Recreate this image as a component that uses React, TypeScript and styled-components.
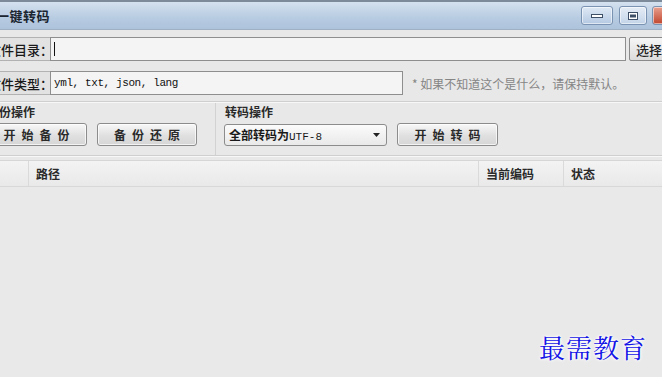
import React from "react";
import styled, { createGlobalStyle } from "styled-components";

const Global = createGlobalStyle`
  html, body { margin: 0; padding: 0; background: #e6e6e6; overflow: hidden; }
  body { font-family: "Noto Sans CJK SC", "Liberation Sans", sans-serif; }
  #root { width: 662px; height: 377px; overflow: hidden; }
`;

const Window = styled.div`
  margin-left: -14px;
  width: 712px;
  height: 377px;
  display: flex;
  flex-direction: column;
  background: #e8e8e8;
`;

const TitleBar = styled.div`
  height: 27px;
  border-top: 2px solid #7d8a99;
  background: linear-gradient(#d4e1ef, #b7cbe1 60%, #adc3dc);
  border-bottom: 1px solid #9fb0c4;
  display: flex;
  align-items: center;
  padding-left: 10px;
`;

const Title = styled.div`
  flex: 1;
  font-size: 13px;
  font-weight: 700;
  color: #1a2530;
  letter-spacing: 0.5px;
`;

const WinBtn = styled.div<{ $w: number; $bg: string; $mr: number }>`
  width: ${p => p.$w}px;
  height: 17px;
  margin-right: ${p => p.$mr}px;
  border: 1px solid #7b93b2;
  border-radius: 3px;
  background: ${p => p.$bg};
  display: flex;
  align-items: center;
  justify-content: center;
  box-shadow: inset 0 0 0 1px rgba(255,255,255,0.55);
`;

const Body = styled.div`
  display: flex;
  flex-direction: column;
  padding: 7px 0 0 0;
`;

const FieldRow = styled.div<{ $mb: number }>`
  display: flex;
  align-items: center;
  height: 24px;
  margin-bottom: ${p => p.$mb}px;
`;

const Label = styled.div`
  width: 64px;
  height: 24px;
  box-sizing: border-box;
  border: 1px solid #b2b2b2;
  border-right: none;
  background: #e2e2e2;
  display: flex;
  align-items: center;
  padding-left: 1px;
  font-size: 13px;
  font-weight: 500;
  color: #1a1a1a;
  white-space: nowrap;
`;

const Input = styled.div<{ $w: number }>`
  width: ${p => p.$w}px;
  height: 24px;
  box-sizing: border-box;
  border: 1px solid #8e8e8e;
  background: #f4f4f4;
  display: flex;
  align-items: center;
  padding-left: 3px;
  font-family: "Liberation Mono", "DejaVu Sans Mono", monospace;
  font-size: 11px;
  color: #111;
  letter-spacing: -0.4px;
`;

const Caret = styled.span`
  width: 1px;
  height: 14px;
  background: #111;
`;

const SideButton = styled.div`
  margin-left: 3px;
  height: 24px;
  width: 50px;
  box-sizing: border-box;
  border: 1px solid #8a8a8a;
  border-radius: 2px;
  background: linear-gradient(#f6f6f6, #dcdcdc);
  display: flex;
  align-items: center;
  padding-left: 6px;
  font-size: 13px;
  font-weight: 500;
  color: #222;
`;

const Hint = styled.div`
  margin-left: 9px;
  font-size: 12px;
  color: #858585;
  white-space: nowrap;
`;

const Separator = styled.div`
  height: 1px;
  background: #cfcfcf;
  border-bottom: 1px solid #f7f7f7;
`;

const Groups = styled.div`
  display: flex;
  height: 52px;
`;

const Group = styled.div<{ $w: number; $divider?: boolean }>`
  width: ${p => p.$w}px;
  box-sizing: border-box;
  padding: 1px 0 0 ${p => (p.$divider ? 8 : 0)}px;
  border-left: ${p => (p.$divider ? "1px solid #d2d2d2" : "none")};
  display: flex;
  flex-direction: column;
  gap: 3px;
`;

const GroupTitle = styled.div`
  font-size: 12px;
  font-weight: 700;
  color: #2a2a2a;
  height: 16px;
  line-height: 16px;
  padding-left: 1px;
`;

const ButtonRow = styled.div`
  display: flex;
  align-items: center;
  gap: 10px;
`;

const PushButton = styled.div<{ $w: number }>`
  width: ${p => p.$w}px;
  height: 23px;
  box-sizing: border-box;
  border: 1px solid #8c8c8c;
  border-radius: 3px;
  background: linear-gradient(#f8f8f8, #e0e0e0 55%, #d6d6d6);
  box-shadow: inset 0 0 0 1px rgba(255,255,255,0.7);
  display: flex;
  align-items: center;
  justify-content: center;
  font-size: 12px;
  font-weight: 700;
  color: #2a2a2a;
  letter-spacing: 6px;
  text-indent: 6px;
`;

const Select = styled.div`
  width: 163px;
  height: 22px;
  box-sizing: border-box;
  border: 1px solid #8c8c8c;
  border-radius: 3px;
  background: linear-gradient(#fbfbfb, #e9e9e9);
  display: flex;
  align-items: center;
  padding: 0 6px 0 4px;
  font-size: 12px;
  color: #1a1a1a;
`;

const SelectText = styled.span`
  flex: 1;
  font-weight: 700;
`;

const Mono = styled.span`
  font-family: "Liberation Mono", monospace;
  font-weight: 400;
  font-size: 11px;
`;

const TableHeader = styled.div`
  margin-top: 3px;
  height: 25px;
  display: flex;
  background: linear-gradient(#f3f3f3, #e9e9e9);
  border-top: 1px solid #d6d6d6;
  border-bottom: 1px solid #d8d8d8;
`;

const HeaderCell = styled.div<{ $w: number; $pad: number }>`
  width: ${p => p.$w}px;
  box-sizing: border-box;
  padding-left: ${p => p.$pad}px;
  border-right: 1px solid #dadada;
  display: flex;
  align-items: center;
  font-size: 12px;
  font-weight: 700;
  color: #2a2a2a;
`;

const TableBody = styled.div`
  flex: 1;
  position: relative;
  background: #e9e9e9;
`;

const Watermark = styled.div`
  position: absolute;
  left: 553px;
  top: 141px;
  font-family: "AR PL UKai CN", "Noto Serif CJK SC", "Noto Sans CJK SC", serif;
  font-size: 26px;
  color: #1414e6;
  letter-spacing: 1px;
  text-shadow: 0 0 2px #fff, 0 0 3px #fff, 0 0 4px #fff;
`;

export default function App() {
  return (
    <>
      <Global />
      <Window>
        <TitleBar>
          <Title>一键转码</Title>
          <WinBtn $w={30} $mr={6} $bg="linear-gradient(#dfe9f5, #b4c9e2)">
            <svg width="12" height="4" viewBox="0 0 12 4">
              <rect x="0.5" y="0.5" width="11" height="3" fill="#fff" stroke="#3c4f66" />
            </svg>
          </WinBtn>
          <WinBtn $w={26} $mr={5} $bg="linear-gradient(#e5edf6, #c3d4e8)">
            <svg width="10" height="8" viewBox="0 0 10 8">
              <rect x="0.5" y="0.5" width="9" height="7" fill="#fff" stroke="#3c4f66" />
              <rect x="2" y="2.5" width="6" height="3" fill="#3c4f66" />
            </svg>
          </WinBtn>
          <WinBtn $w={40} $mr={4} $bg="linear-gradient(#e9a08f, #c0452e)" />
        </TitleBar>
        <Body>
          <FieldRow $mb={10}>
            <Label>文件目录：</Label>
            <Input $w={576}><Caret /></Input>
            <SideButton>选择</SideButton>
          </FieldRow>
          <FieldRow $mb={6}>
            <Label>文件类型：</Label>
            <Input $w={353}>yml, txt, json, lang</Input>
            <Hint>* 如果不知道这个是什么，请保持默认。</Hint>
          </FieldRow>
          <Separator />
          <Groups>
            <Group $w={229}>
              <GroupTitle>备份操作</GroupTitle>
              <ButtonRow>
                <PushButton $w={101}>开始备份</PushButton>
                <PushButton $w={100}>备份还原</PushButton>
              </ButtonRow>
            </Group>
            <Group $w={300} $divider>
              <GroupTitle>转码操作</GroupTitle>
              <ButtonRow>
                <Select>
                  <SelectText>全部转码为<Mono>UTF-8</Mono></SelectText>
                  <svg width="7" height="4" viewBox="0 0 7 4">
                    <path d="M0 0 H7 L3.5 4 Z" fill="#222" />
                  </svg>
                </Select>
                <PushButton $w={101}>开始转码</PushButton>
              </ButtonRow>
            </Group>
          </Groups>
          <Separator />
        </Body>
        <TableHeader>
          <HeaderCell $w={43} $pad={0} />
          <HeaderCell $w={450} $pad={7}>路径</HeaderCell>
          <HeaderCell $w={85} $pad={7}>当前编码</HeaderCell>
          <HeaderCell $w={134} $pad={7}>状态</HeaderCell>
        </TableHeader>
        <TableBody>
          <Watermark>最需教育</Watermark>
        </TableBody>
      </Window>
    </>
  );
}
